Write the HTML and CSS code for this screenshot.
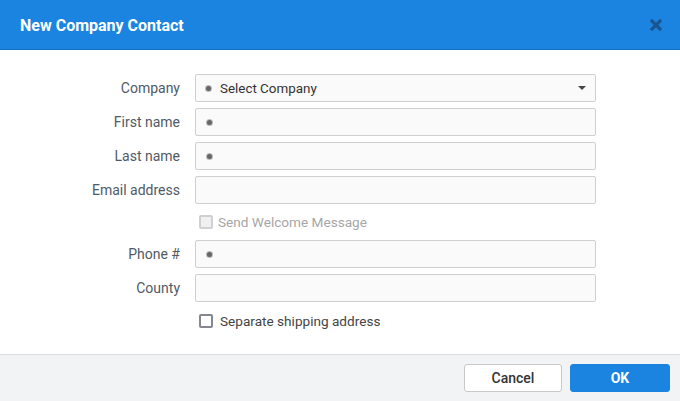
FILE: index.html
```html
<!DOCTYPE html>
<html>
<head>
<meta charset="utf-8">
<link rel="stylesheet" href="styles.css">
</head>
<body>
<div class="dialog">
  <div class="header">
    <div class="title">New Company Contact</div>
    <svg class="close" width="12" height="12" viewBox="0 0 12 12"><path d="M2 2 L10 10 M10 2 L2 10" stroke="#1a5590" stroke-width="3.2" stroke-linecap="square"/></svg>
  </div>
  <div class="body">
    <div class="form">
      <label class="lbl">Company</label>
      <div class="field select"><span class="dot"></span><span class="val">Select Company</span><span class="caret"></span></div>
      <label class="lbl">First name</label>
      <div class="field"><span class="dot"></span></div>
      <label class="lbl">Last name</label>
      <div class="field"><span class="dot"></span></div>
      <label class="lbl">Email address</label>
      <div class="field"></div>
      <div></div>
      <div class="check disabled"><span class="box"></span><span>Send Welcome Message</span></div>
      <label class="lbl">Phone #</label>
      <div class="field"><span class="dot"></span></div>
      <label class="lbl">County</label>
      <div class="field"></div>
      <div></div>
      <div class="check last"><span class="box"></span><span>Separate shipping address</span></div>
    </div>
  </div>
  <div class="footer">
    <button class="btn cancel">Cancel</button>
    <button class="btn ok">OK</button>
  </div>
</div>
</body>
</html>
```
FILE: styles.css
```css
html, body { margin: 0; padding: 0; }
body { width: 680px; height: 401px; overflow: hidden; font-family: Roboto, "Liberation Sans", sans-serif; background: #fff; }
.dialog { display: flex; flex-direction: column; height: 401px; }
.header { height: 49px; border-bottom: 1px solid #1472c6; background: #1a84e0; display: flex; align-items: center; justify-content: space-between; padding: 0 18px 0 20px; }
.title { color: #fff; font-size: 16px; font-weight: 700; margin-top: 2px; }
.close { display: block; margin-top: 1px; }
.body { flex: 1; padding-top: 24px; }
.form { display: grid; grid-template-columns: 180px 401px; column-gap: 15px; row-gap: 6px; }
.lbl { justify-self: end; align-self: center; font-size: 14px; color: #505a66; }
.field { height: 26px; border: 1px solid #cfcfcf; border-radius: 2px; background: #fafafa; display: flex; align-items: center; padding-left: 11px; position: relative; }
.dot { width: 5px; height: 5px; border-radius: 50%; background: #666; box-shadow: 0 0 0 1px #bbb; }
.select .dot { margin-left: -1px; }
.val { margin-left: 9px; font-size: 13.4px; color: #333; }
.caret { position: absolute; right: 9px; top: 11px; width: 0; height: 0; border-left: 4px solid transparent; border-right: 4px solid transparent; border-top: 4px solid #444; }
.check { height: 24px; display: flex; align-items: center; font-size: 13.6px; color: #444; padding-left: 4px; }
.check.last { height: 26px; }
.check .box { width: 10px; height: 10px; border: 2px solid #86868f; border-radius: 2px; margin-right: 7px; background: #fff; }
.check.disabled { color: #a6a6a6; }
.check.disabled .box { border-color: #cfcfd4; background: #f0f0f0; margin-right: 5px; }
.footer { height: 46px; border-top: 1px solid #dcdde0; background: #f2f3f5; display: flex; justify-content: flex-end; align-items: center; gap: 8px; padding-right: 10px; }
.btn { height: 28px; border-radius: 3px; font-family: Roboto, "Liberation Sans", sans-serif; font-size: 14px; font-weight: 500; padding: 0; }
.cancel { width: 98px; background: #fff; border: 1px solid #c8c8c8; color: #333; }
.ok { width: 100px; background: #1a84e0; border: 1px solid #1a84e0; color: #fff; font-weight: 700; }
```
